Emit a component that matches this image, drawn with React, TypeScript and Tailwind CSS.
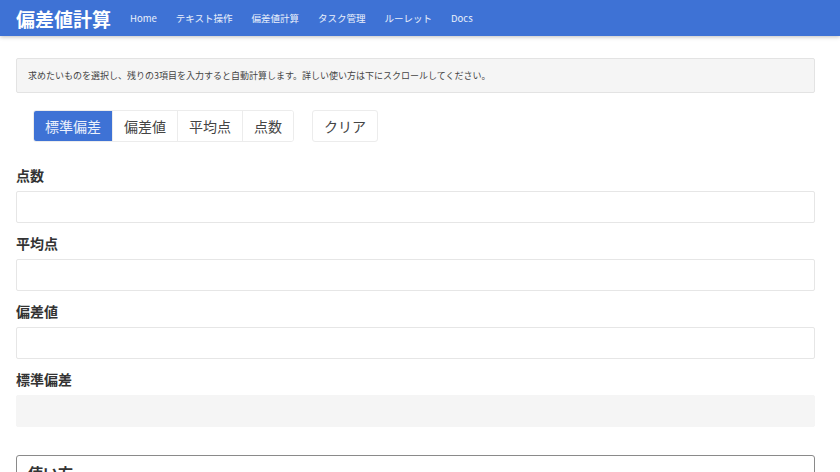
const font = { fontFamily: '"Noto Sans CJK JP", "Liberation Sans", sans-serif' };

const navLinks = ["Home", "テキスト操作", "偏差値計算", "タスク管理", "ルーレット", "Docs"];
const modes = ["標準偏差", "偏差値", "平均点", "点数"];
const fields = ["点数", "平均点", "偏差値", "標準偏差"];

export default function App() {
  const active = "標準偏差";

  return (
    <div className="min-h-[472px] bg-white text-[#333]" style={font}>
      <nav className="flex h-9 items-center bg-[#3e72d5] px-4 shadow-[0_1px_4px_rgba(0,0,0,0.25)]">
        <span className="mr-[19px] text-[19px] font-bold leading-none text-white">偏差値計算</span>
        <ul className="flex items-center gap-[19px]">
          {navLinks.map((l) => (
            <li key={l} className="text-[9.5px] text-white/90">
              {l}
            </li>
          ))}
        </ul>
      </nav>

      <main className="pl-4 pr-[25px]">
        <div className="mt-[22px] flex h-[35px] items-center rounded-[2px] border border-[#e3e3e3] bg-[#f5f5f5] px-[11px] text-[9px] text-[#444]">
          求めたいものを選択し、残りの3項目を入力すると自動計算します。詳しい使い方は下にスクロールしてください。
        </div>

        <div className="ml-[17px] mt-[17px] flex items-center">
          <div className="flex h-8 overflow-hidden rounded-[3px] border border-[#ececec]">
            {modes.map((m, i) => (
              <button
                key={m}
                className={`flex items-center px-[11px] text-[14px] ${
                  m === active ? "bg-[#3e72d5] text-white/90" : "bg-white text-[#444]"
                } ${i > 0 ? "border-l border-[#ececec]" : ""}`}
              >
                {m}
              </button>
            ))}
          </div>
          <button className="ml-[18px] flex h-8 items-center rounded-[3px] border border-[#ececec] bg-white px-[11px] text-[14px] text-[#444]">
            クリア
          </button>
        </div>

        <div className="mt-[24px]">
          {fields.map((f, i) => (
            <div key={f} className={i > 0 ? "mt-[11px]" : ""}>
              <label className="block h-[18px] text-[14px] font-bold leading-[18px] text-[#333]">{f}</label>
              <input
                disabled={f === "標準偏差"}
                className={`mt-[7px] block h-8 w-full rounded-[2px] border outline-none ${
                  f === "標準偏差" ? "border-[#f5f5f5] bg-[#f5f5f5]" : "border-[#e6e6e6] bg-white"
                }`}
              />
            </div>
          ))}
        </div>

        <section className="mt-[28px] rounded-t-[3px] border border-[#8a8a8a] px-[11px] pt-[6px]">
          <h2 className="text-[15px] font-bold text-[#333]">使い方</h2>
        </section>
      </main>
    </div>
  );
}
